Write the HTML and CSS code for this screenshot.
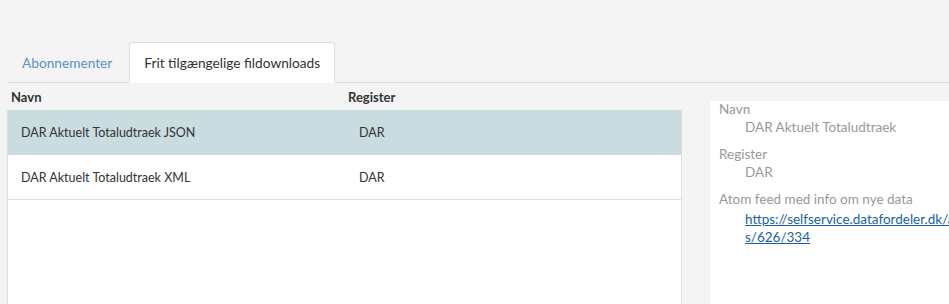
FILE: index.html
```html
<!DOCTYPE html>
<html lang="da">
<head>
    <meta charset="UTF-8">
    <title>Fildownloads</title>
    <link rel="stylesheet" href="styles.css">
</head>
<body>
    <div class="page">
        <ul class="tabs">
            <li class="tab"><a href="#">Abonnementer</a></li>
            <li class="tab active"><a href="#">Frit tilgængelige fildownloads</a></li>
        </ul>

        <div class="content">
            <div class="list">
                <div class="list-head">
                    <span class="col-name">Navn</span>
                    <span class="col-reg">Register</span>
                </div>
                <div class="list-body">
                    <div class="row selected">
                        <span class="col-name">DAR Aktuelt Totaludtraek JSON</span>
                        <span class="col-reg">DAR</span>
                    </div>
                    <div class="row">
                        <span class="col-name">DAR Aktuelt Totaludtraek XML</span>
                        <span class="col-reg">DAR</span>
                    </div>
                </div>
            </div>

            <div class="details">
                <dl>
                    <dt>Navn</dt>
                    <dd>DAR Aktuelt Totaludtraek</dd>
                    <dt>Register</dt>
                    <dd>DAR</dd>
                    <dt>Atom feed med info om nye data</dt>
                    <dd class="link"><a href="#">https://selfservice.datafordeler.dk/atomfeeds/626/334</a></dd>
                </dl>
            </div>
        </div>
    </div>
</body>
</html>
```

FILE: styles.css
```css
* {
    box-sizing: border-box;
    margin: 0;
    padding: 0;
}

html, body {
    height: 100%;
    overflow: hidden;
}

body {
    font-family: 'Lato', sans-serif;
    font-size: 13px;
    background: #f4f4f4;
    color: #333;
}

.page {
    padding: 42px 0 0 7px;
}

.tabs {
    list-style: none;
    display: flex;
    border-bottom: 1px solid #ddd;
    height: 41px;
    font-size: 13.7px;
}

.tab a {
    display: block;
    height: 41px;
    line-height: 40px;
    padding: 0 14px;
    color: #5a8fd0;
    text-decoration: none;
    border: 1px solid transparent;
    border-radius: 4px 4px 0 0;
    margin-right: 2px;
}

.tab.active a {
    background: #fff;
    color: #333;
    border-color: #ddd;
    border-bottom-color: #fff;
}

.content {
    display: flex;
    gap: 28px;
}

.list {
    width: 675px;
    flex-shrink: 0;
}

.list-head {
    display: flex;
    height: 27px;
    align-items: center;
    font-weight: bold;
    color: #333;
    padding-left: 4px;
}

.list-head .col-name {
    width: 337px;
}

.list-body {
    background: #fff;
    border-left: 1px solid #ddd;
    border-right: 1px solid #ddd;
    height: 194px;
    font-size: 12.5px;
}

.row {
    display: flex;
    align-items: center;
    height: 45px;
    border-bottom: 1px solid #ddd;
    padding-left: 13px;
}

.row.selected {
    background: #c9dce0;
    border-bottom-color: #c9dce0;
}

.row .col-name {
    width: 338px;
}

.details {
    flex-shrink: 0;
    width: 300px;
    background: #fff;
    margin-top: 18px;
    padding-left: 9px;
    height: 203px;
    color: #999;
    font-size: 13.5px;
    line-height: 17.5px;
}

.details dd {
    margin: 0 0 10px 26px;
}

.details dd.link {
    margin-top: 1px;
    line-height: 18px;
}

.details a {
    color: #1a5fa8;
    word-break: break-all;
}
```
